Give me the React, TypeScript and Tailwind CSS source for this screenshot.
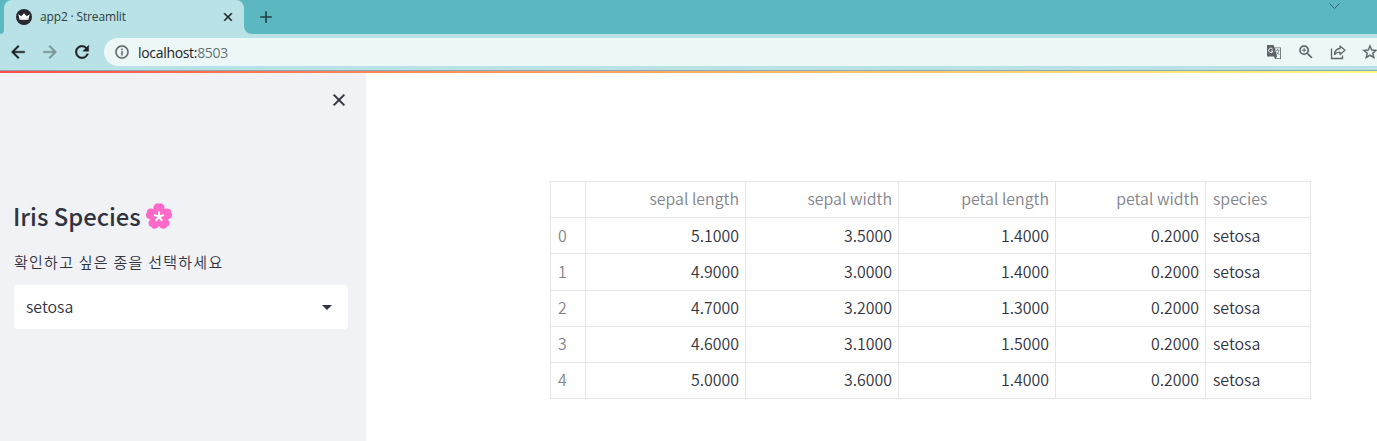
import { MdArrowBack, MdArrowForward, MdRefresh, MdInfoOutline, MdClose, MdAdd, MdArrowDropDown, MdStarBorder, MdZoomIn } from "react-icons/md";

const columns = ["sepal length", "sepal width", "petal length", "petal width"];
const rows = [
  ["5.1000", "3.5000", "1.4000", "0.2000"],
  ["4.9000", "3.0000", "1.4000", "0.2000"],
  ["4.7000", "3.2000", "1.3000", "0.2000"],
  ["4.6000", "3.1000", "1.5000", "0.2000"],
  ["5.0000", "3.6000", "1.4000", "0.2000"],
];

function Favicon() {
  return (
    <svg className="h-4 w-4" viewBox="0 0 16 16">
      <circle cx="8" cy="8" r="8" fill="#262730" />
      <path d="M2.200 5.300 5.300 7.200 8 4.200l2.700 3 3.100-1.900-1.700 5.600H3.900z" fill="#fff" />
      <path d="M3.200 8.600 8 10.200l4.800-1.600-.7 2.300H3.900z" fill="#d5d5d9" />
    </svg>
  );
}

function Blossom() {
  return (
    <svg className="ml-[5px] h-[26px] w-[26px]" viewBox="0 0 26 26">
      {[0, 72, 144, 216, 288].map((angle) => (
        <path
          key={angle}
          transform={`rotate(${angle} 13 13.600)`}
          d="M13 14C8 11.500 6.700 6 7.800 3.200C8.600 .8 11.300-.3 13 .8C14.700-.3 17.400 .8 18.200 3.200C19.300 6 18 11.500 13 14Z"
          fill="#ff6ac8"
        />
      ))}
      <path
        d="m13 13.600V9.200M13 13.600l4.200-1.400M13 13.600l2.600 3.600M13 13.600l-2.600 3.600M13 13.600l-4.200-1.400"
        fill="none"
        stroke="#fff"
        strokeWidth="2"
        strokeLinecap="round"
      />
    </svg>
  );
}

function Share() {
  return (
    <svg className="h-4 w-4" viewBox="0 0 16 16" fill="none" stroke="#5f6368" strokeWidth="1.300">
      <path d="M1.500 4.500v10h11v-3" />
      <path d="M4.500 10.500c.4-4 2.500-5.800 5.500-6V2l5 4.300-5 4.300V8.200C7.600 8.200 6 8.900 4.500 10.500z" strokeLinejoin="round" />
    </svg>
  );
}

function Browser() {
  return (
    <header className="flex h-[71px] flex-col border-b border-[#8fa9ad] bg-[#b8e2e5] font-['Open_Sans','Noto_Sans',sans-serif]">
      <div className="flex h-[34px] shrink-0 bg-[#b8e2e5]">
        <div className="w-1 rounded-br-[4px] bg-[#5bb8c1]" />
        <div className="w-[240px] bg-[#5bb8c1]">
          <div className="flex h-[34px] items-center rounded-t-lg bg-[#b8e2e5] pl-3 pr-[9px]">
            <Favicon />
            <span className="ml-2 text-[12px] tracking-[-0.15px] text-[#303b3e]">app2 · Streamlit</span>
            <MdClose className="ml-auto h-[14px] w-[14px] stroke-[#202124] stroke-[0.8] text-[#202124] [&>path[fill=none]]:stroke-none" />
          </div>
        </div>
        <div className="flex flex-1 items-center rounded-bl-lg bg-[#5bb8c1] pl-3">
          <MdAdd className="h-5 w-5 text-[#263f43]" />
          <svg className="mb-[22px] ml-auto mr-[37px] h-[7px] w-[11px]" viewBox="0 0 11 7" fill="none" stroke="#36686e">
            <path d="m.5.5 5 5 5-5" />
          </svg>
        </div>
      </div>
      <div className="flex h-9 items-center pl-2">
        <MdArrowBack className="h-5 w-5 stroke-[#202124] stroke-[0.5] text-[#202124] [&>path[fill=none]]:stroke-none" />
        <MdArrowForward className="ml-3 h-5 w-5 stroke-[#7b9497] stroke-[0.5] text-[#7b9497] [&>path[fill=none]]:stroke-none" />
        <MdRefresh className="ml-3 h-5 w-5 stroke-[#202124] stroke-[0.5] text-[#202124] [&>path[fill=none]]:stroke-none" />
        <div className="ml-3 flex h-7 flex-1 items-center rounded-l-full bg-[#ecf8f8] pl-[10px]">
          <MdInfoOutline className="h-4 w-4 stroke-[#5f6368] stroke-[0.4] text-[#5f6368] [&>path[fill=none]]:stroke-none" />
          <span className="ml-2 text-[14px] tracking-[-0.32px] text-[#202124]">
            localhost:<span className="text-[#667477]">8503</span>
          </span>
          <div className="ml-auto flex w-[111px] shrink-0 items-center overflow-hidden text-[#5f6368]">
            <svg className="h-4 w-4 shrink-0" viewBox="0 0 16 16">
              <path d="M1 1h6.500l1 2.500H15V15H9l-1-2.500H1z" fill="#5f6368" />
              <path d="M8.900 4.300h5.300v9.900H9.800l1.300-1.700z" fill="#ecf8f8" />
              <path d="M6.600 5A2.200 2.200 0 1 0 7 7H5" fill="none" stroke="#ecf8f8" />
              <path d="M9.500 6.300h4M11.500 5v1.300M13 6.500c-.4 2-1.400 3.300-3 4.300M10.500 8l3 3" fill="none" stroke="#70777a" strokeWidth=".8" />
            </svg>
            <MdZoomIn className="ml-[15px] h-[18px] w-[18px] shrink-0 stroke-current stroke-[0.3] [&>path[fill=none]]:stroke-none" />
            <div className="ml-[15px] shrink-0"><Share /></div>
            <MdStarBorder className="ml-[15px] h-[18px] w-[18px] shrink-0 stroke-current stroke-[0.4] [&>path[fill=none]]:stroke-none" />
          </div>
        </div>
      </div>
    </header>
  );
}

export default function App() {
  return (
    <div className="flex h-[441px] w-[1377px] flex-col overflow-hidden bg-white font-['Noto_Sans_CJK_KR',sans-serif] text-[#31333f]">
      <Browser />
      <div className="h-0.5 shrink-0 bg-linear-to-r from-[#ff4b4b] to-[#fffd80]" />
      <div className="flex flex-1">
        <aside className="flex w-[366px] flex-col bg-[#f0f2f6] pl-[14px] pr-[18px]">
          <div className="-mr-px flex justify-end pt-[17px]">
            <MdClose className="h-5 w-5 stroke-current stroke-[0.5] text-[#31333f] [&>path[fill=none]]:stroke-none" />
          </div>
          <h2 className="-ml-px mt-[92px] flex h-[28px] items-center text-[23.800px] font-medium leading-7">
            Iris Species
            <Blossom />
          </h2>
          <label className="mt-5 text-[15px] font-[350] leading-6 tracking-[1.250px]">확인하고 싶은 종을 선택하세요</label>
          <div className="mt-[11px] flex h-11 items-center rounded bg-white pl-3 pr-[9px]">
            <span className="text-[15.900px] font-[350] leading-6">setosa</span>
            <MdArrowDropDown className="ml-auto h-6 w-6" />
          </div>
        </aside>
        <main className="pl-[184px] pt-[108px]">
          <table className="w-[761px] table-fixed border-separate border-spacing-0 border-l border-t border-[#e6e6e8] text-[15.900px] font-[350] leading-6">
            <colgroup>
              <col className="w-[35px]" />
              <col className="w-[160px]" />
              <col className="w-[153px]" />
              <col className="w-[157px]" />
              <col className="w-[150px]" />
              <col className="w-[105px]" />
            </colgroup>
            <thead>
              <tr className="h-9 text-[#83848c]">
                <th className="border-b border-r border-[#e6e6e8]" />
                {columns.map((c) => (
                  <th key={c} className="border-b border-r border-[#e6e6e8] p-0 pb-0.5 pr-1.5 text-right font-[350]">{c}</th>
                ))}
                <th className="border-b border-r border-[#e6e6e8] p-0 pb-0.5 pl-[7px] text-left font-[350]">species</th>
              </tr>
            </thead>
            <tbody>
              {rows.map((row, i) => (
                <tr key={i} className="h-9 nth-2:h-[37px] nth-[n+3]:*:pb-0.5">
                  <td className="border-b border-r border-[#e6e6e8] pl-[7px] pt-0 text-[#83848c]">{i}</td>
                  {row.map((v, j) => (
                    <td key={j} className="border-b border-r border-[#e6e6e8] pr-1.5 pt-0 text-right">{v}</td>
                  ))}
                  <td className="border-b border-r border-[#e6e6e8] pl-[7px] pt-0">setosa</td>
                </tr>
              ))}
            </tbody>
          </table>
        </main>
      </div>
    </div>
  );
}
